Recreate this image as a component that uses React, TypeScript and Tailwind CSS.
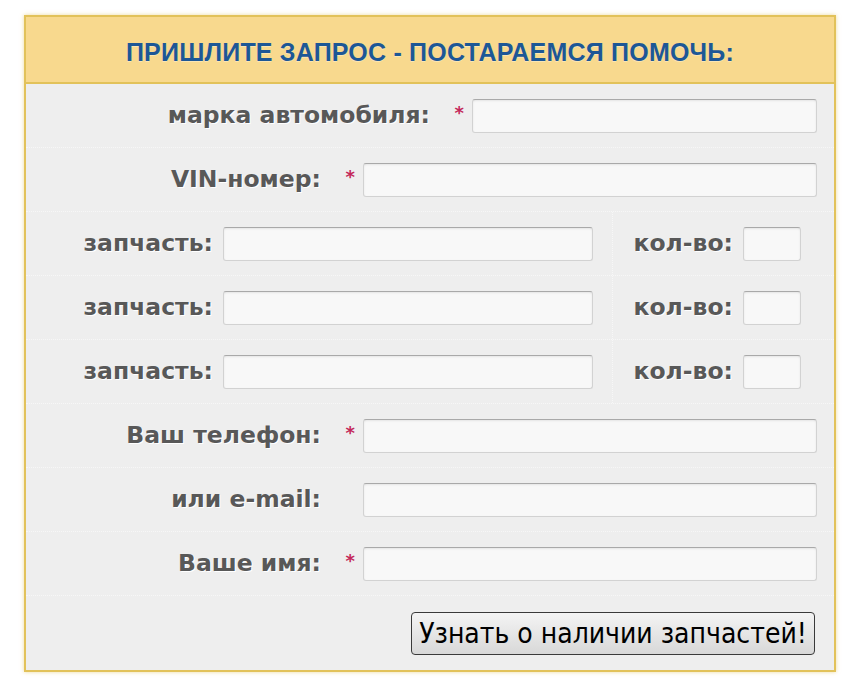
import React from 'react'

const labelCls =
  "font-['DejaVu_Sans',sans-serif] font-bold text-[23.5px] text-[#585858] [text-shadow:1px_1px_0_#ffffff] whitespace-nowrap"

function Star() {
  return (
    <span className="font-['DejaVu_Sans',sans-serif] font-bold text-[18px] text-[#c4285a] leading-none">*</span>
  )
}

function Field({ className = '' }: { className?: string }) {
  return (
    <input
      type="text"
      className={`h-[34px] rounded-[3px] border border-[#d2d2d2] border-t-[#a9a9a9] bg-[#f8f8f8] shadow-[inset_0_1px_2px_rgba(0,0,0,0.08)] outline-none ${className}`}
    />
  )
}

function Row({ children, last = false }: { children: React.ReactNode; last?: boolean }) {
  return (
    <div
      className={`flex h-[64px] items-center ${last ? '' : 'border-b border-dotted border-[#f7f7f7]'}`}
    >
      {children}
    </div>
  )
}

function WideRow({ label, required, labelWidth }: { label: string; required?: boolean; labelWidth: string }) {
  return (
    <Row>
      <div className={`${labelWidth} shrink-0 text-right ${labelCls}`}>{label}</div>
      <div className="flex h-full flex-1 items-center pr-[17px]">
        <div className="flex w-[42px] shrink-0 justify-end pr-[8px] pb-[6px]">{required && <Star />}</div>
        <Field className="flex-1" />
      </div>
    </Row>
  )
}

function PartRow() {
  return (
    <Row>
      <div className={`w-[187px] shrink-0 text-right ${labelCls}`}>запчасть:</div>
      <Field className="ml-[10px] w-[370px]" />
      <div className="ml-[19px] flex h-full flex-1 items-center border-l border-dotted border-[#f7f7f7]">
        <div className={`flex-1 pr-[10px] text-right ${labelCls}`}>кол-во:</div>
        <Field className="mr-[33px] w-[58px]" />
      </div>
    </Row>
  )
}

export default function App() {
  return (
    <div className="min-h-[688px] bg-white pt-[15px] pl-[24px]">
      <div className="w-[812px] border-[2px] border-[#e2c25a] shadow-[0_0_4px_rgba(226,194,90,0.6)]">
        <div className="flex h-[67px] items-center justify-center border-b-[2px] border-[#e2c25a] bg-[#f8d98e] pt-[6px]">
          <h2 className="font-['Liberation_Sans_Narrow','Liberation_Sans',sans-serif] font-bold text-[25px] tracking-[0.2px] text-[#1d5796] [text-shadow:0_1px_0_rgba(255,255,255,0.35)]">
            ПРИШЛИТЕ ЗАПРОС - ПОСТАРАЕМСЯ ПОМОЧЬ:
          </h2>
        </div>
        <div className="bg-[#eeeeee]">
          <WideRow label="марка автомобиля:" required labelWidth="w-[404px]" />
          <WideRow label="VIN-номер:" required labelWidth="w-[295px]" />
          <PartRow />
          <PartRow />
          <PartRow />
          <WideRow label="Ваш телефон:" required labelWidth="w-[295px]" />
          <WideRow label="или e-mail:" labelWidth="w-[295px]" />
          <WideRow label="Ваше имя:" required labelWidth="w-[295px]" />
          <div className="flex h-[74px] items-start justify-end pr-[19px] pt-[16px]">
            <button className="h-[43px] w-[404px] rounded-[4px] border border-[#3a3a3a] bg-gradient-to-b from-[#f4f4f4] to-[#d8d8d8] font-['DejaVu_Sans_Condensed','DejaVu_Sans',sans-serif] text-[28px] leading-none text-black">
              Узнать о наличии запчастей!
            </button>
          </div>
        </div>
      </div>
    </div>
  )
}
